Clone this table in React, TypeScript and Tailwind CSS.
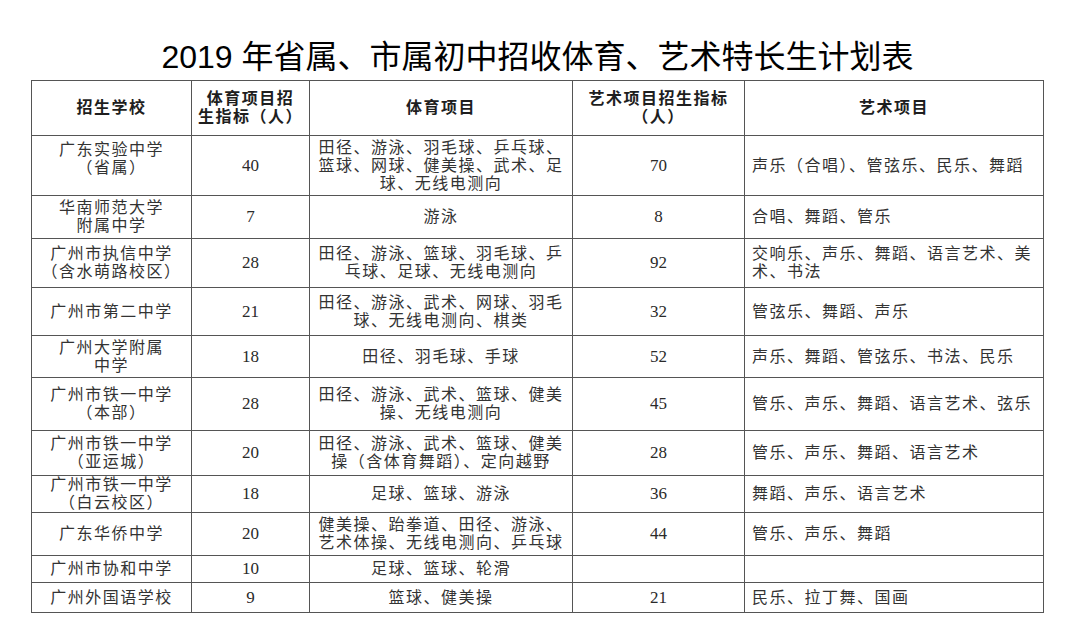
import React from "react";

type Row = {
  school: string[];
  sportN: string;
  sport: string[];
  artN: string;
  art: string[];
  schoolCls?: string;
};

const rows: Row[] = [
  { school: ["广东实验中学", "（省属）"], sportN: "40", sport: ["田径、游泳、羽毛球、乒乓球、", "篮球、网球、健美操、武术、足", "球、无线电测向"], artN: "70", art: ["声乐（合唱）、管弦乐、民乐、舞蹈"], schoolCls: "pb-[14px]" },
  { school: ["华南师范大学", "附属中学"], sportN: "7", sport: ["游泳"], artN: "8", art: ["合唱、舞蹈、管乐"] },
  { school: ["广州市执信中学", "（含水萌路校区）"], sportN: "28", sport: ["田径、游泳、篮球、羽毛球、乒", "乓球、足球、无线电测向"], artN: "92", art: ["交响乐、声乐、舞蹈、语言艺术、美", "术、书法"] },
  { school: ["广州市第二中学"], sportN: "21", sport: ["田径、游泳、武术、网球、羽毛", "球、无线电测向、棋类"], artN: "32", art: ["管弦乐、舞蹈、声乐"] },
  { school: ["广州大学附属", "中学"], sportN: "18", sport: ["田径、羽毛球、手球"], artN: "52", art: ["声乐、舞蹈、管弦乐、书法、民乐"] },
  { school: ["广州市铁一中学", "（本部）"], sportN: "28", sport: ["田径、游泳、武术、篮球、健美", "操、无线电测向"], artN: "45", art: ["管乐、声乐、舞蹈、语言艺术、弦乐"] },
  { school: ["广州市铁一中学", "（亚运城）"], sportN: "20", sport: ["田径、游泳、武术、篮球、健美", "操（含体育舞蹈）、定向越野"], artN: "28", art: ["管乐、声乐、舞蹈、语言艺术"] },
  { school: ["广州市铁一中学", "（白云校区）"], sportN: "18", sport: ["足球、篮球、游泳"], artN: "36", art: ["舞蹈、声乐、语言艺术"] },
  { school: ["广东华侨中学"], sportN: "20", sport: ["健美操、跆拳道、田径、游泳、", "艺术体操、无线电测向、乒乓球"], artN: "44", art: ["管乐、声乐、舞蹈"] },
  { school: ["广州市协和中学"], sportN: "10", sport: ["足球、篮球、轮滑"], artN: "", art: [] },
  { school: ["广州外国语学校"], sportN: "9", sport: ["篮球、健美操"], artN: "21", art: ["民乐、拉丁舞、国画"] },
];

const cellBase =
  "flex flex-col justify-center border-r border-b border-[#555] overflow-hidden";
const center = "items-center text-center";

function Lines({ lines }: { lines: string[] }) {
  return (
    <>
      {lines.map((l, i) => (
        <span key={i} className="block whitespace-nowrap">
          {l}
        </span>
      ))}
    </>
  );
}

export default function App() {
  return (
    <div className="w-[1080px] h-[618px] bg-white overflow-hidden">
      <div className="ml-[31px] w-[1013px] h-[80px] flex items-end justify-center pb-[2px]">
        <h1 className="font-['Liberation_Sans','Noto_Sans_CJK_SC',sans-serif] text-[32px] leading-[42px] text-black font-normal whitespace-nowrap">
          2019 年省属、市属初中招收体育、艺术特长生计划表
        </h1>
      </div>
      <div className="ml-[31px] w-max grid grid-cols-[160px_118px_263px_172px_299px] grid-rows-[55px_60px_43px_49px_48px_42px_53px_45px_37px_43px_27px_30px] border-l border-t border-[#555] font-['Liberation_Serif','Noto_Sans_CJK_SC',serif] text-[16px] leading-[18px] tracking-[1.5px] text-[#333]">
        <div className={`${cellBase} ${center} font-bold text-[#1e1e1e]`}>
          <span>招生学校</span>
        </div>
        <div className={`${cellBase} ${center} font-bold text-[#1e1e1e]`}>
          <Lines lines={["体育项目招", "生指标（人）"]} />
        </div>
        <div className={`${cellBase} ${center} font-bold text-[#1e1e1e]`}>
          <span>体育项目</span>
        </div>
        <div className={`${cellBase} ${center} font-bold text-[#1e1e1e]`}>
          <Lines lines={["艺术项目招生指标", "（人）"]} />
        </div>
        <div className={`${cellBase} ${center} font-bold text-[#1e1e1e]`}>
          <span>艺术项目</span>
        </div>
        {rows.map((r, i) => (
          <React.Fragment key={i}>
            <div className={`${cellBase} ${center} ${r.schoolCls ?? ""}`}>
              <Lines lines={r.school} />
            </div>
            <div className={`${cellBase} ${center} text-[17px] tracking-normal text-[#2a2a2a]`}>
              <span>{r.sportN}</span>
            </div>
            <div className={`${cellBase} ${center}`}>
              <Lines lines={r.sport} />
            </div>
            <div className={`${cellBase} ${center} text-[17px] tracking-normal text-[#2a2a2a]`}>
              <span>{r.artN}</span>
            </div>
            <div className={`${cellBase} items-start text-left pl-[7px]`}>
              <Lines lines={r.art} />
            </div>
          </React.Fragment>
        ))}
      </div>
    </div>
  );
}
